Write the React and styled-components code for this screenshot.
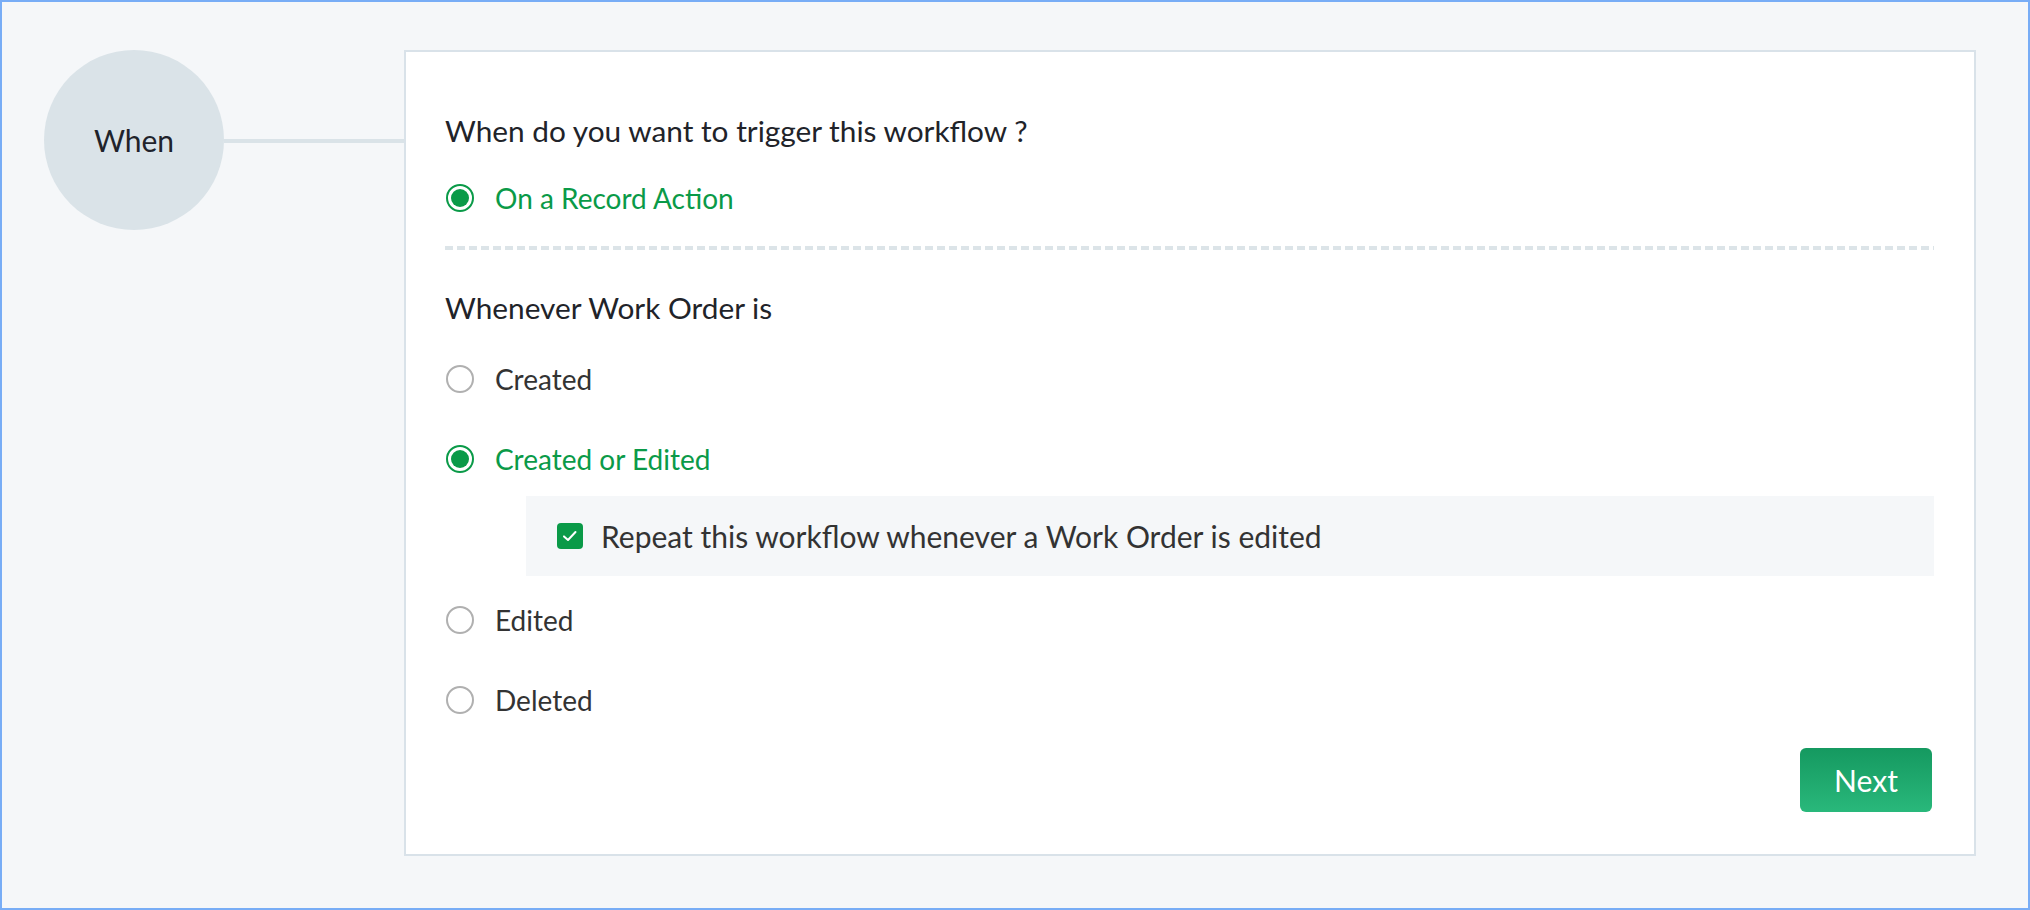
import React from 'react';
import styled, { createGlobalStyle } from 'styled-components';

const GlobalStyle = createGlobalStyle`
  * {
    box-sizing: border-box;
  }
  html, body {
    margin: 0;
    padding: 0;
  }
  body {
    font-family: Lato, 'Open Sans', sans-serif;
    background: #f5f7f9;
  }
`;

const Page = styled.div`
  display: flex;
  align-items: flex-start;
  height: 100vh;
  padding: 48px 52px 52px 42px;
  border: 2px solid #78adf6;
  background: #f5f7f9;
`;

const StepCircle = styled.div`
  flex: none;
  display: flex;
  align-items: center;
  justify-content: center;
  width: 180px;
  height: 180px;
  border-radius: 50%;
  background: #dae3e8;
  color: #1f232b;
  font-size: 30px;
`;

const Connector = styled.div`
  flex: none;
  width: 180px;
  height: 4px;
  margin-top: 89px;
  background: #dae3e8;
`;

const Card = styled.section`
  flex: 1;
  align-self: stretch;
  display: flex;
  flex-direction: column;
  padding: 59px 40px 42px 39px;
  border: 2px solid #d9e2e9;
  background: #fff;
`;

const Heading = styled.div`
  height: 40px;
  line-height: 40px;
  font-size: 29.8px;
  color: #212329;
  margin-bottom: ${(p) => p.$gap || 0}px;
`;

const Option = styled.label`
  display: flex;
  align-items: center;
  gap: 21px;
  height: 40px;
  padding-left: 1px;
  font-size: 28px;
  color: ${(p) => (p.$checked ? '#0a9a48' : '#333')};
  margin-bottom: ${(p) => p.$gap || 0}px;
`;

const RadioMark = styled.span`
  flex: none;
  position: relative;
  width: 28px;
  height: 28px;
  border-radius: 50%;
  border: 2px solid ${(p) => (p.$checked ? '#0a9a48' : '#b0b0b0')};
  background: #fff;

  &::after {
    content: '';
    display: ${(p) => (p.$checked ? 'block' : 'none')};
    position: absolute;
    inset: 3px;
    border-radius: 50%;
    background: #0a9a48;
  }
`;

const Dashed = styled.div`
  height: 4px;
  margin: 28px 0 38px;
  background: repeating-linear-gradient(
    to right,
    #dce4e8 0 8px,
    transparent 8px 12px
  );
`;

const SubPanel = styled.div`
  display: flex;
  align-items: center;
  gap: 18px;
  height: 80px;
  margin: 17px 0 24px 81px;
  padding-left: 31px;
  background: #f5f7f9;
  font-size: 30px;
  color: #333;
`;

const CheckBox = styled.span`
  flex: none;
  display: flex;
  align-items: center;
  justify-content: center;
  width: 26px;
  height: 26px;
  border-radius: 4px;
  background: #0a9a48;
`;

const Footer = styled.div`
  display: flex;
  justify-content: flex-end;
  margin-top: auto;
  padding-right: 2px;
`;

const NextButton = styled.button`
  width: 132px;
  height: 64px;
  border: none;
  border-radius: 6px;
  background: linear-gradient(to bottom, #159960, #29b87b);
  color: #fff;
  font-family: Lato, 'Open Sans', sans-serif;
  font-size: 30px;
  cursor: pointer;
`;

function Radio({ label, checked, gap }) {
  return (
    <Option $checked={checked} $gap={gap}>
      <RadioMark $checked={checked} />
      {label}
    </Option>
  );
}

export default function App() {
  return (
    <>
      <GlobalStyle />
      <Page>
        <StepCircle>When</StepCircle>
        <Connector />
        <Card>
          <Heading $gap={27}>When do you want to trigger this workflow ?</Heading>
          <Radio label="On a Record Action" checked />
          <Dashed />
          <Heading $gap={31}>Whenever Work Order is</Heading>
          <Radio label="Created" gap={40} />
          <Radio label="Created or Edited" checked />
          <SubPanel>
            <CheckBox>
              <svg width="18" height="18" viewBox="0 0 18 18" fill="none">
                <path d="M3 9.4 L7 13 L14.5 5" stroke="#fff" strokeWidth="2" strokeLinecap="round" strokeLinejoin="round" />
              </svg>
            </CheckBox>
            Repeat this workflow whenever a Work Order is edited
          </SubPanel>
          <Radio label="Edited" gap={40} />
          <Radio label="Deleted" />
          <Footer>
            <NextButton>Next</NextButton>
          </Footer>
        </Card>
      </Page>
    </>
  );
}
